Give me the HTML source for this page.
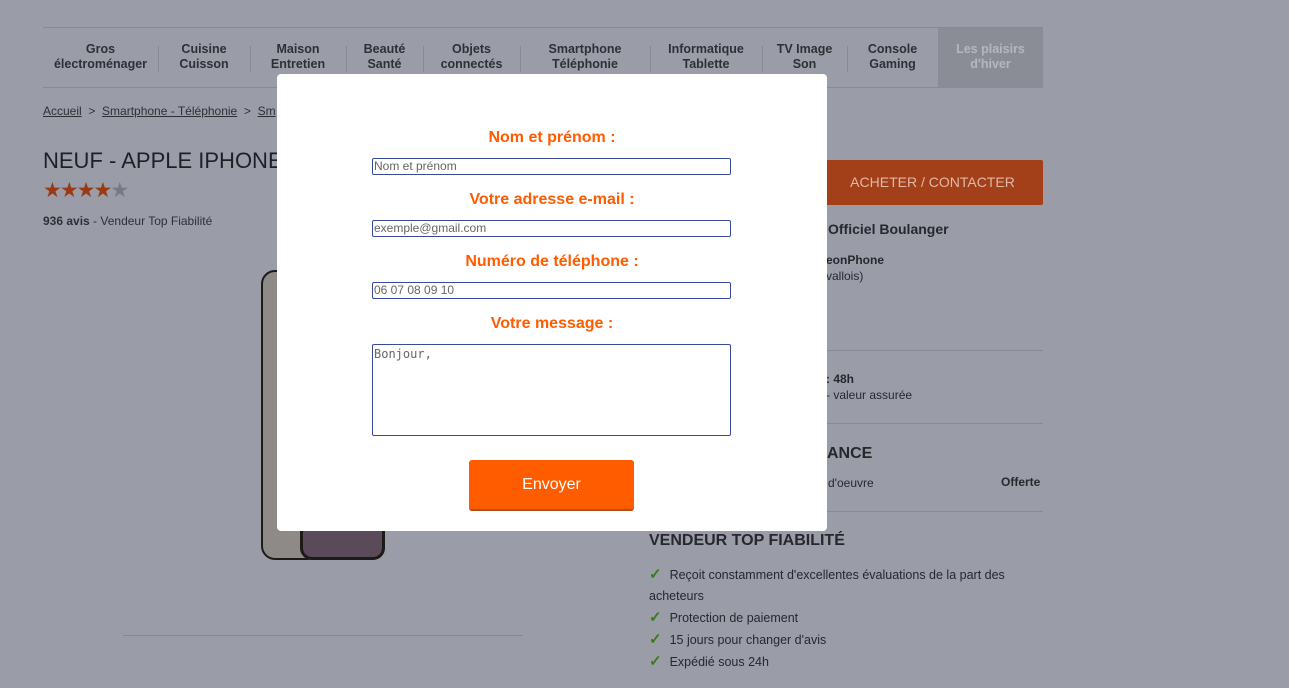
<!DOCTYPE html>
<html><head><meta charset="utf-8"><style>
*{margin:0;padding:0;box-sizing:border-box}
body{width:1289px;height:688px;overflow:hidden;background:#9a9da8;font-family:"Liberation Sans",sans-serif;color:#26282e;position:relative}
.a{position:absolute}
.nav{left:43px;top:27px;width:1000px;height:61px;border-top:1px solid #878a94;border-bottom:1px solid #878a94}
.nav div{position:absolute;top:14px;font-size:12.5px;font-weight:bold;text-align:center;line-height:15px;color:#2e3036}
.sep{position:absolute;top:18px;width:1px;height:26px;background:#878a94}
.hr{position:absolute;height:1px;background:#878a94}
.modal{left:277px;top:74px;width:550px;height:457px;background:#fff;border-radius:4px}
.lab{position:absolute;left:0;width:550px;text-align:center;color:#ff5c00;font-weight:bold;font-size:16px}
.inp{position:absolute;left:95px;width:359px;height:17px;border:1px solid #3a4a9a;border-radius:2px;font-size:12px;color:#666;padding-left:1px;line-height:15px}
.chk{color:#3a7a1a;font-weight:bold;font-size:15px;margin-right:8px}
</style></head><body>
<div class="a nav">
<div style="left:0;width:115px">Gros<br>électroménager</div><span class="sep" style="left:115px"></span>
<div style="left:115px;width:92px">Cuisine<br>Cuisson</div><span class="sep" style="left:207px"></span>
<div style="left:207px;width:96px">Maison<br>Entretien</div><span class="sep" style="left:303px"></span>
<div style="left:303px;width:77px">Beauté<br>Santé</div><span class="sep" style="left:380px"></span>
<div style="left:380px;width:97px">Objets<br>connectés</div><span class="sep" style="left:477px"></span>
<div style="left:477px;width:130px">Smartphone<br>Téléphonie</div><span class="sep" style="left:607px"></span>
<div style="left:607px;width:112px">Informatique<br>Tablette</div><span class="sep" style="left:719px"></span>
<div style="left:719px;width:85px">TV Image<br>Son</div><span class="sep" style="left:804px"></span>
<div style="left:804px;width:91px">Console<br>Gaming</div>
<div style="left:895px;top:0;width:105px;height:60px;background:#8a8d96;color:#b4b7bf;padding-top:14px">Les plaisirs<br>d'hiver</div>
</div>
<div class="a" style="left:43px;top:104px;font-size:12px;color:#2e3036"><u>Accueil</u> &nbsp;&gt;&nbsp; <u>Smartphone - Téléphonie</u> &nbsp;&gt;&nbsp; <u>Sm</u></div>
<div class="a" style="left:43px;top:148px;font-size:22px;color:#1e2026">NEUF - APPLE IPHONE</div>
<div class="a" style="left:43px;top:178px;font-size:21px;color:#9a3a14;letter-spacing:-2px">★★★★<span style="color:#777a84">★</span></div>
<div class="a" style="left:43px;top:214px;font-size:12px;color:#2e3036"><b>936 avis</b> - Vendeur Top Fiabilité</div>
<div class="a" style="left:261px;top:270px;width:60px;height:290px;border:2px solid #1e1a18;border-radius:14px;background:#8e8a88"></div>
<div class="a" style="left:300px;top:500px;width:85px;height:60px;border:3px solid #1e1a18;border-radius:12px;background:#5a4a5a"></div>
<div class="hr" style="left:123px;top:635px;width:400px;background:#7e8a94"></div>
<div class="a" style="left:820px;top:160px;width:223px;height:45px;background:#a3401a;border-radius:2px;color:#e0b8a6;font-size:14px;text-align:center;line-height:45px;padding-left:2px">ACHETER / CONTACTER</div>
<div class="a" style="left:828px;top:221px;font-size:14px;font-weight:bold">Officiel Boulanger</div>
<div class="a" style="left:826px;top:252px;font-size:12px;line-height:16px"><b>eonPhone</b><br>vallois)</div>
<div class="hr" style="left:827px;top:350px;width:216px"></div>
<div class="a" style="left:826px;top:371px;font-size:12px;line-height:16px"><b>: 48h</b><br>- valeur assurée</div>
<div class="hr" style="left:827px;top:423px;width:216px"></div>
<div class="a" style="left:827px;top:445px;font-size:16px;font-weight:bold">ANCE</div>
<div class="a" style="left:828px;top:476px;font-size:12px">d'oeuvre</div>
<div class="a" style="left:1001px;top:475px;font-size:12px;font-weight:bold">Offerte</div>
<div class="hr" style="left:649px;top:511px;width:394px"></div>
<div class="a" style="left:649px;top:532px;font-size:16px;font-weight:bold">VENDEUR TOP FIABILITÉ</div>
<div class="a" style="left:649px;top:564px;font-size:12.5px;line-height:21px;width:385px">
<span class="chk">✓</span>Reçoit constamment d'excellentes évaluations de la part des acheteurs<br>
<span class="chk">✓</span>Protection de paiement<br>
<span class="chk">✓</span>15 jours pour changer d'avis<br>
<span class="chk">✓</span>Expédié sous 24h</div>

<div class="a modal">
<div class="lab" style="top:55px">Nom et prénom :</div>
<div class="inp" style="top:84px">Nom et prénom</div>
<div class="lab" style="top:117px">Votre adresse e-mail :</div>
<div class="inp" style="top:146px">exemple@gmail.com</div>
<div class="lab" style="top:179px">Numéro de téléphone :</div>
<div class="inp" style="top:208px">06 07 08 09 10</div>
<div class="lab" style="top:241px">Votre message :</div>
<div class="inp" style="top:270px;height:92px;font-family:'DejaVu Sans Mono',monospace;font-size:12px;padding-top:2px">Bonjour,</div>
<div class="a" style="left:192px;top:386px;width:165px;height:51px;background:#ff5c00;border-radius:3px;border-bottom:2px solid #b05020;color:#fff;font-size:16px;text-align:center;line-height:49px">Envoyer</div>
</div>
</body></html>
